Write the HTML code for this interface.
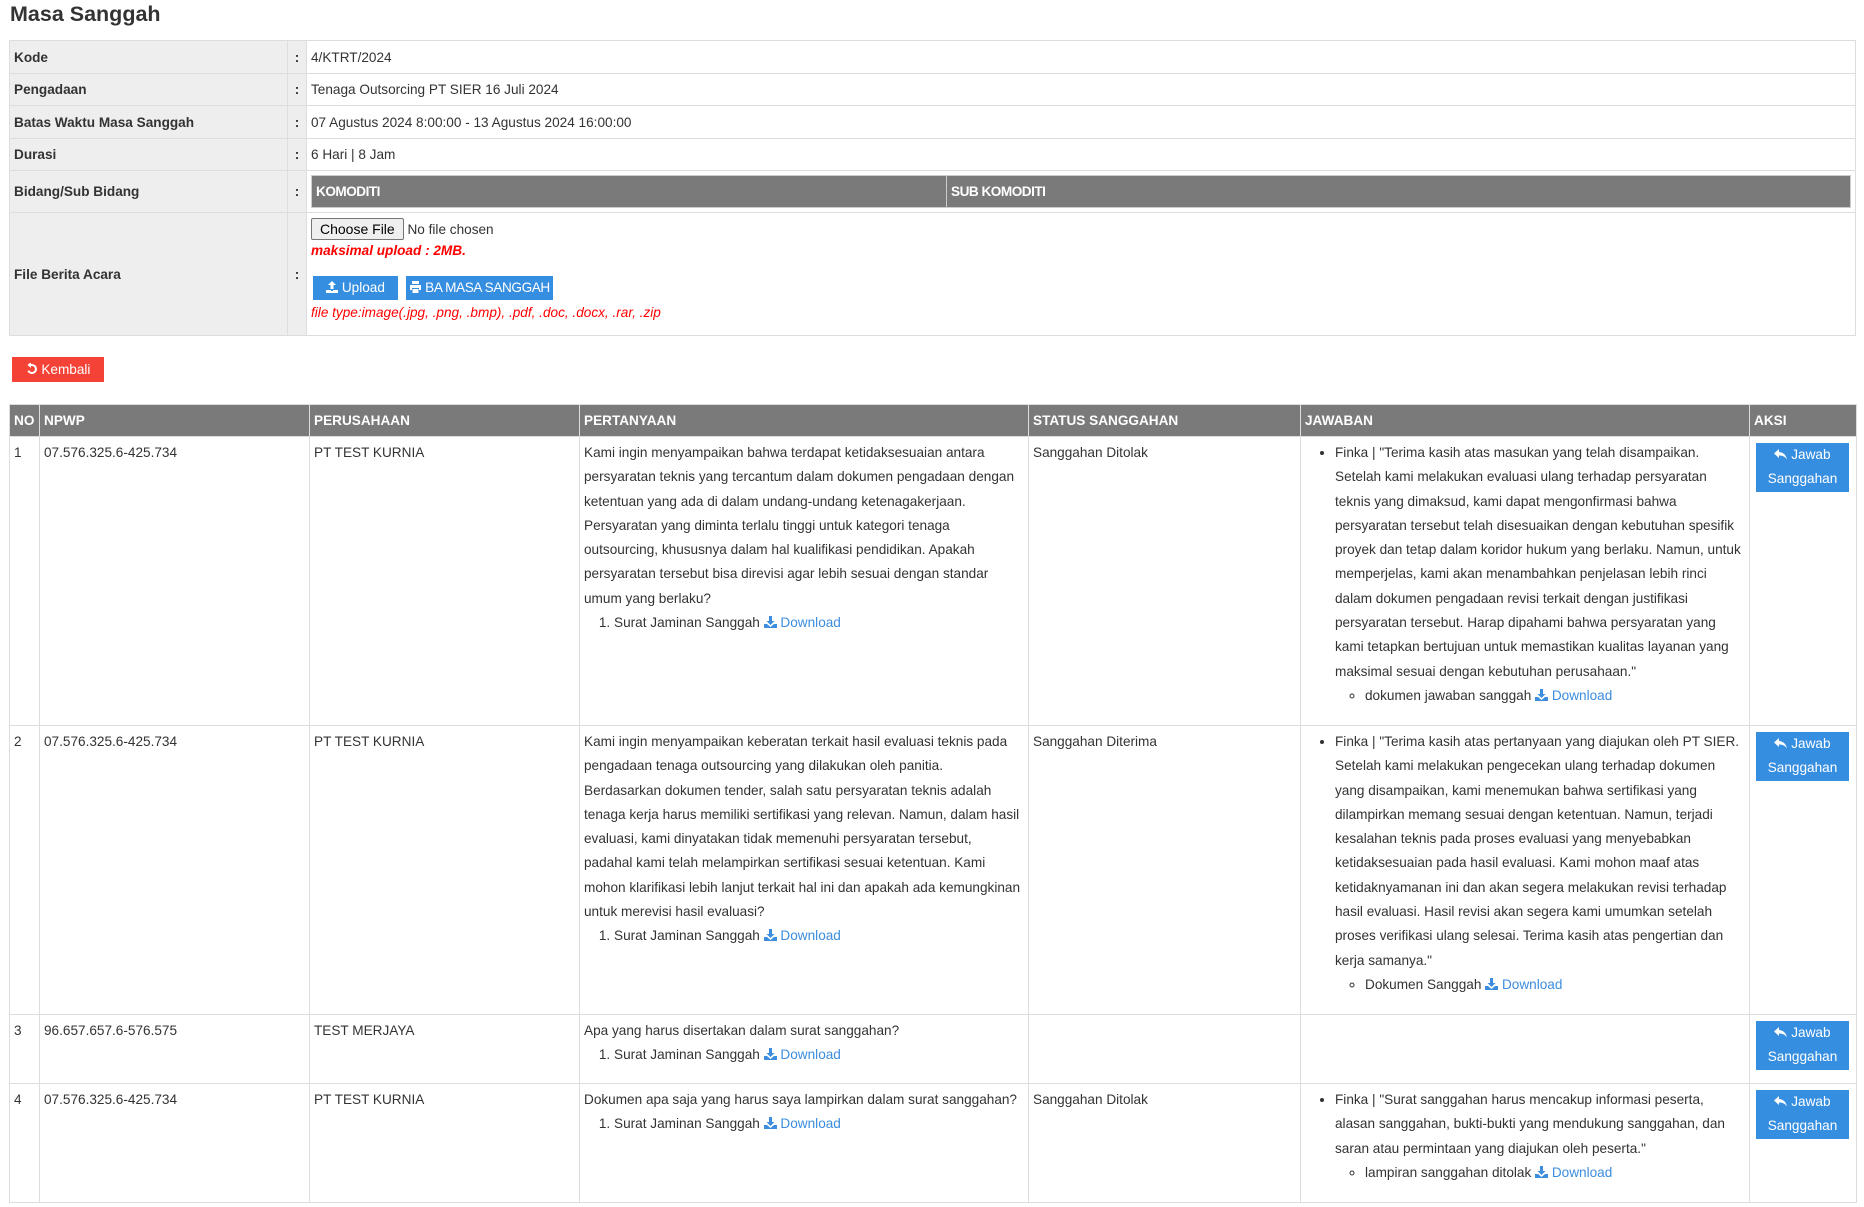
<!DOCTYPE html>
<html><head><meta charset="utf-8">
<style>
*{box-sizing:border-box}
body{margin:0;background:#fff;font-family:"Liberation Sans",Arial,sans-serif;font-size:13.6px;color:#333;width:1864px;height:1207px;overflow:hidden;position:relative}
h1{position:absolute;left:10px;top:2px;margin:0;font-size:21.5px;font-weight:bold;color:#333}
table{border-collapse:collapse}
.info{position:absolute;left:9px;top:40px;width:1847px;table-layout:fixed}
.info td{border:1px solid #ddd;padding:0 4px;vertical-align:middle}
.info td.l{background:#eee;font-weight:bold;width:278px}
.info td.c{background:#eee;width:19px;text-align:center;font-weight:bold;padding:0}
.kom{width:100%;border-collapse:collapse;margin:4px 0}
.kom th{background:#7a7a7a;color:#fff;text-align:left;font-weight:bold;height:32px;padding:0 4px;border:1px solid #ccc;letter-spacing:-0.5px}
.btn{display:inline-block;background:#368ee0;color:#fff;font-size:13.6px;height:24px;line-height:24px;padding:0 6px;vertical-align:middle;white-space:nowrap}
.cf{display:inline-block;border:1px solid #767676;background:#efefef;border-radius:2px;padding:1px 8px;height:22px;line-height:19px;font-size:14px;color:#000}
.red{color:#f00;font-style:italic}
.kembali{position:absolute;left:12px;top:357px;width:92px;height:25px;background:#f44336;color:#fff;line-height:25px;text-align:center;font-size:13.6px}
.main{position:absolute;left:9px;top:404px;width:1847px;table-layout:fixed}
.main th{background:#7a7a7a;color:#fff;text-align:left;height:32px;padding:0 4px;border:1px solid #ddd;font-size:13.6px}
.main td{border:1px solid #ddd;vertical-align:top;padding:4px 4px;line-height:24.3px}
.main ol{margin:0;padding-left:30px}
.main ul{margin:0;padding-left:30px}
.main ul ul{padding-left:30px;list-style:circle}
a{color:#3c8dde;text-decoration:none}
.jb{display:block;background:#368ee0;color:#fff;text-align:center;width:93px;margin:6px 0 0 6px;padding:0;line-height:24.3px;height:49px}
svg{vertical-align:-1px}
</style></head><body>
<h1>Masa Sanggah</h1>
<table class="info">
<tr style="height:33px"><td class="l">Kode</td><td class="c">:</td><td>4/KTRT/2024</td></tr>
<tr style="height:32px"><td class="l">Pengadaan</td><td class="c">:</td><td>Tenaga Outsorcing PT SIER 16 Juli 2024</td></tr>
<tr style="height:33px"><td class="l">Batas Waktu Masa Sanggah</td><td class="c">:</td><td>07 Agustus 2024 8:00:00 - 13 Agustus 2024 16:00:00</td></tr>
<tr style="height:32px"><td class="l">Durasi</td><td class="c">:</td><td>6 Hari | 8 Jam</td></tr>
<tr style="height:42px"><td class="l">Bidang/Sub Bidang</td><td class="c">:</td><td><table class="kom"><tr><th style="width:635px">KOMODITI</th><th>SUB KOMODITI</th></tr></table></td></tr>
<tr style="height:123px"><td class="l">File Berita Acara</td><td class="c">:</td><td style="vertical-align:top;padding-top:5px">
<div><span class="cf">Choose File</span> No file chosen</div>
<div class="red" style="font-weight:bold;margin-top:3px">maksimal upload : 2MB.</div>
<div style="margin-top:18px;padding-left:2px"><span class="btn" style="width:85px;text-align:center"><svg width="12" height="12" viewBox="0 0 12 12"><path d="M6 0L2 4h2.5v4h3V4H10z M0 9h5v1h2V9h5v3H0z" fill="#fff"/></svg> Upload</span> <span class="btn" style="margin-left:4px;padding:0 3px;letter-spacing:-0.4px"><svg width="13" height="12" viewBox="0 0 13 12"><path d="M3 0h7v3H3z M1 4h11v5h-2V7H3v2H1z M3.5 8h6v4h-6z" fill="#fff"/></svg> BA MASA SANGGAH</span></div>
<div class="red" style="margin-top:5px">file type:image(.jpg, .png, .bmp), .pdf, .doc, .docx, .rar, .zip</div>
</td></tr>
</table>
<div class="kembali"><svg width="12" height="12" viewBox="0 0 12 12"><path d="M6 1a5 5 0 1 1-4.6 7l1.8-.7A3 3 0 1 0 6 3H5v2L1.5 2 5 -1v2z" fill="#fff"/></svg> Kembali</div>

<table class="main">
<colgroup><col style="width:30px"><col style="width:270px"><col style="width:270px"><col style="width:449px"><col style="width:272px"><col style="width:449px"><col style="width:107px"></colgroup>
<tr><th>NO</th><th>NPWP</th><th>PERUSAHAAN</th><th>PERTANYAAN</th><th>STATUS SANGGAHAN</th><th>JAWABAN</th><th>AKSI</th></tr>
<tr style="height:289px"><td>1</td><td>07.576.325.6-425.734</td><td>PT TEST KURNIA</td>
<td>Kami ingin menyampaikan bahwa terdapat ketidaksesuaian antara persyaratan teknis yang tercantum dalam dokumen pengadaan dengan ketentuan yang ada di dalam undang-undang ketenagakerjaan. Persyaratan yang diminta terlalu tinggi untuk kategori tenaga outsourcing, khususnya dalam hal kualifikasi pendidikan. Apakah persyaratan tersebut bisa direvisi agar lebih sesuai dengan standar umum yang berlaku?<ol><li>Surat Jaminan Sanggah <a><svg width="13" height="12" viewBox="0 0 13 12"><path d="M5 0h3v5h2.5L6.5 9 2.5 5H5z M0 8h3l3.5 3L10 8h3v4H0z" fill="#3c8dde"/></svg> Download</a></li></ol></td>
<td>Sanggahan Ditolak</td>
<td><ul><li>Finka | "Terima kasih atas masukan yang telah disampaikan. Setelah kami melakukan evaluasi ulang terhadap persyaratan teknis yang dimaksud, kami dapat mengonfirmasi bahwa persyaratan tersebut telah disesuaikan dengan kebutuhan spesifik proyek dan tetap dalam koridor hukum yang berlaku. Namun, untuk memperjelas, kami akan menambahkan penjelasan lebih rinci dalam dokumen pengadaan revisi terkait dengan justifikasi persyaratan tersebut. Harap dipahami bahwa persyaratan yang kami tetapkan bertujuan untuk memastikan kualitas layanan yang maksimal sesuai dengan kebutuhan perusahaan."<ul><li>dokumen jawaban sanggah <a><svg width="13" height="12" viewBox="0 0 13 12"><path d="M5 0h3v5h2.5L6.5 9 2.5 5H5z M0 8h3l3.5 3L10 8h3v4H0z" fill="#3c8dde"/></svg> Download</a></li></ul></li></ul></td>
<td style="padding:0"><div class="jb"><svg width="13" height="12" viewBox="0 0 13 12"><path d="M5 1L0 5.5 5 10V7.5c3.5 0 6 1 8 4C12 7 9.5 4.5 5 4z" fill="#fff"/></svg> Jawab<br>Sanggahan</div></td></tr>
<tr style="height:289px"><td>2</td><td>07.576.325.6-425.734</td><td>PT TEST KURNIA</td>
<td style="white-space:nowrap">Kami ingin menyampaikan keberatan terkait hasil evaluasi teknis pada<br>pengadaan tenaga outsourcing yang dilakukan oleh panitia.<br>Berdasarkan dokumen tender, salah satu persyaratan teknis adalah<br>tenaga kerja harus memiliki sertifikasi yang relevan. Namun, dalam hasil<br>evaluasi, kami dinyatakan tidak memenuhi persyaratan tersebut,<br>padahal kami telah melampirkan sertifikasi sesuai ketentuan. Kami<br>mohon klarifikasi lebih lanjut terkait hal ini dan apakah ada kemungkinan<br>untuk merevisi hasil evaluasi?<ol><li>Surat Jaminan Sanggah <a><svg width="13" height="12" viewBox="0 0 13 12"><path d="M5 0h3v5h2.5L6.5 9 2.5 5H5z M0 8h3l3.5 3L10 8h3v4H0z" fill="#3c8dde"/></svg> Download</a></li></ol></td>
<td>Sanggahan Diterima</td>
<td><ul><li>Finka | "Terima kasih atas pertanyaan yang diajukan oleh PT SIER. Setelah kami melakukan pengecekan ulang terhadap dokumen yang disampaikan, kami menemukan bahwa sertifikasi yang dilampirkan memang sesuai dengan ketentuan. Namun, terjadi kesalahan teknis pada proses evaluasi yang menyebabkan ketidaksesuaian pada hasil evaluasi. Kami mohon maaf atas ketidaknyamanan ini dan akan segera melakukan revisi terhadap hasil evaluasi. Hasil revisi akan segera kami umumkan setelah proses verifikasi ulang selesai. Terima kasih atas pengertian dan kerja samanya."<ul><li>Dokumen Sanggah <a><svg width="13" height="12" viewBox="0 0 13 12"><path d="M5 0h3v5h2.5L6.5 9 2.5 5H5z M0 8h3l3.5 3L10 8h3v4H0z" fill="#3c8dde"/></svg> Download</a></li></ul></li></ul></td>
<td style="padding:0"><div class="jb"><svg width="13" height="12" viewBox="0 0 13 12"><path d="M5 1L0 5.5 5 10V7.5c3.5 0 6 1 8 4C12 7 9.5 4.5 5 4z" fill="#fff"/></svg> Jawab<br>Sanggahan</div></td></tr>
<tr style="height:69px"><td>3</td><td>96.657.657.6-576.575</td><td>TEST MERJAYA</td>
<td>Apa yang harus disertakan dalam surat sanggahan?<ol><li>Surat Jaminan Sanggah <a><svg width="13" height="12" viewBox="0 0 13 12"><path d="M5 0h3v5h2.5L6.5 9 2.5 5H5z M0 8h3l3.5 3L10 8h3v4H0z" fill="#3c8dde"/></svg> Download</a></li></ol></td>
<td></td><td></td>
<td style="padding:0"><div class="jb"><svg width="13" height="12" viewBox="0 0 13 12"><path d="M5 1L0 5.5 5 10V7.5c3.5 0 6 1 8 4C12 7 9.5 4.5 5 4z" fill="#fff"/></svg> Jawab<br>Sanggahan</div></td></tr>
<tr style="height:119px"><td>4</td><td>07.576.325.6-425.734</td><td>PT TEST KURNIA</td>
<td style="white-space:nowrap">Dokumen apa saja yang harus saya lampirkan dalam surat sanggahan?<ol><li>Surat Jaminan Sanggah <a><svg width="13" height="12" viewBox="0 0 13 12"><path d="M5 0h3v5h2.5L6.5 9 2.5 5H5z M0 8h3l3.5 3L10 8h3v4H0z" fill="#3c8dde"/></svg> Download</a></li></ol></td>
<td>Sanggahan Ditolak</td>
<td><ul><li>Finka | "Surat sanggahan harus mencakup informasi peserta, alasan sanggahan, bukti-bukti yang mendukung sanggahan, dan saran atau permintaan yang diajukan oleh peserta."<ul><li>lampiran sanggahan ditolak <a><svg width="13" height="12" viewBox="0 0 13 12"><path d="M5 0h3v5h2.5L6.5 9 2.5 5H5z M0 8h3l3.5 3L10 8h3v4H0z" fill="#3c8dde"/></svg> Download</a></li></ul></li></ul></td>
<td style="padding:0"><div class="jb"><svg width="13" height="12" viewBox="0 0 13 12"><path d="M5 1L0 5.5 5 10V7.5c3.5 0 6 1 8 4C12 7 9.5 4.5 5 4z" fill="#fff"/></svg> Jawab<br>Sanggahan</div></td></tr>
</table>
</body></html>
